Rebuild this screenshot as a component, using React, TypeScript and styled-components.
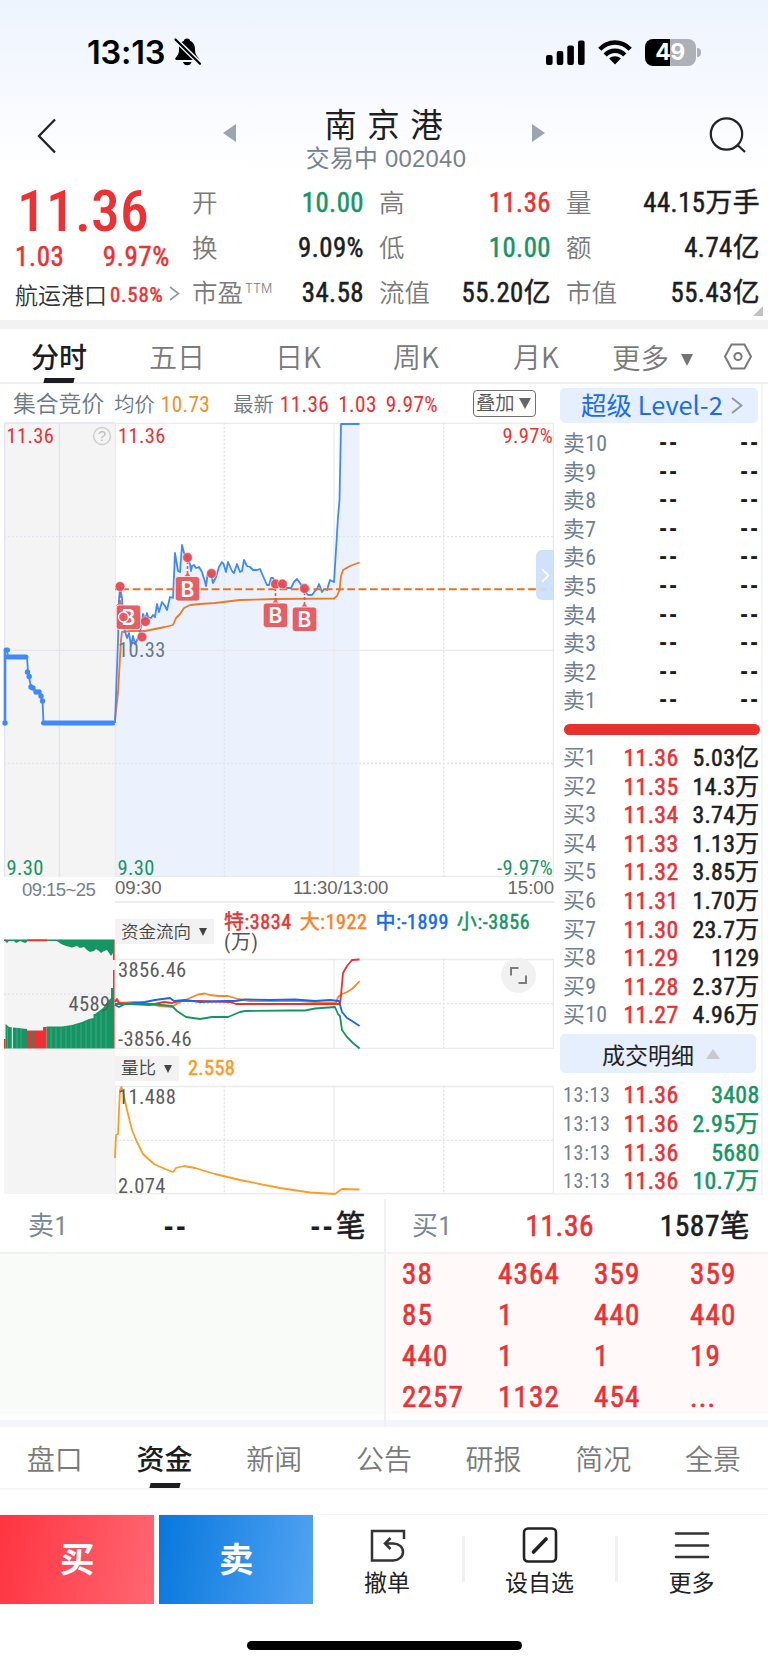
import React from 'react';
import styled, { createGlobalStyle, css } from 'styled-components';

const RED = '#eb3133';
const GREEN = '#159563';
const BLUE = '#4189fb';
const INK = '#1c1d1f';
const SLATE = '#6c7986';
const GRAY = '#7a7a7a';
const NUM = '"Roboto Condensed", "Noto Sans CJK SC", sans-serif';
const CJK = '"Noto Sans CJK SC", sans-serif';
const UI = '"Liberation Sans", "Noto Sans CJK SC", sans-serif';

/* A weight between regular and medium for prices and volumes. */
const semi = css`
  font-weight: 400;
  -webkit-text-stroke: 0.5px currentColor;
`;

const Global = createGlobalStyle`
  *, *::before, *::after { box-sizing: border-box; }
  body { margin: 0; background: #fff; font-family: ${NUM}; color: ${INK}; }
  svg { display: block; flex: none; overflow: visible; }
`;

const Screen = styled.main`
  width: 768px;
  height: 1665px;
  overflow: hidden;
  display: flex;
  flex-direction: column;
  background: linear-gradient(#edf4fe 0, #f5f8ff 75px, #fff 170px);
  white-space: nowrap;
`;

/* ---------- status bar ---------- */
const StatusBar = styled.header`
  height: 88px;
  padding: 16px 67px 0 87px;
  display: flex;
  align-items: center;
`;
const Clock = styled.span`
  font: 600 32.5px/40px Inter, sans-serif;
  letter-spacing: -0.2px;
  color: #000;
  width: 87px;
  margin-top: 1px;
`;
const StatusIcons = styled.div`
  margin-left: auto;
  display: flex;
  align-items: center;
  gap: 13px;
`;
const Battery = styled.div`
  display: flex;
  align-items: center;
  gap: 1.5px;
  &::after {
    content: '';
    width: 4px;
    height: 9px;
    border-radius: 0 4px 4px 0;
    background: #adb0b5;
  }
`;
const BatteryBody = styled.div`
  width: 51px;
  height: 27px;
  border-radius: 8px;
  background: linear-gradient(90deg, #000 50%, #adb0b5 50%);
  color: #fff;
  font: 700 23px/27px Inter, sans-serif;
  letter-spacing: -0.5px;
  text-align: center;
`;

/* ---------- title bar ---------- */
const NavBar = styled.nav`
  height: 92px;
  padding: 0 21px 0 36px;
  display: flex;
  justify-content: space-between;
`;
const NavIcon = styled.div`
  padding-top: 29px;
`;
const TitleGroup = styled.div`
  width: 322px;
  margin-left: 1px;
  display: flex;
  justify-content: space-between;
  padding-top: 13px;
`;
const TitleText = styled.div`
  display: flex;
  flex-direction: column;
  align-items: center;
  padding-top: 3.5px;
  strong {
    font: 400 32.5px/42px ${NUM};
    letter-spacing: 10.5px;
    margin-right: -9.5px;
    color: #1f1f21;
  }
  span {
    font: 400 23.8px/28px ${UI};
    letter-spacing: 0.3px;
    color: #76828f;
    margin-top: -2px;
    margin-left: 4px;
  }
`;
const Switcher = styled.div`
  padding-top: 23px;
`;

/* ---------- quote summary ---------- */
const Quote = styled.section`
  height: 140px;
  display: flex;
`;
const PriceCol = styled.div`
  width: 192px;
  padding: 0 12px 0 15px;
`;
const BigPrice = styled.div`
  font-weight: 500;
  font-size: 57.5px;
  line-height: 58px;
  padding: 3px 0 0 2px;
  letter-spacing: 0.2px;
  color: ${RED};
`;
const ChangeRow = styled.div`
  display: flex;
  justify-content: space-between;
  padding-right: 10px;
  ${semi}
  font-size: 27px;
  line-height: 33px;
  letter-spacing: 0.6px;
  color: ${RED};
`;
const SectorRow = styled.div`
  display: flex;
  align-items: center;
  height: 39px;
  font-weight: 350;
  font-size: 23px;
  color: #333;
  b {
    ${semi}
    font-size: 20.8px;
    letter-spacing: 0.8px;
    color: ${RED};
    margin: 2px 6px 0 3px;
  }
`;
const Stats = styled.div`
  display: grid;
  grid-template-columns: 171px 171px 193px;
  column-gap: 16px;
  grid-template-rows: repeat(3, 45px);
`;
const Stat = styled.div`
  display: flex;
  justify-content: space-between;
  line-height: 47px;
`;
const StatLabel = styled.span`
  font-size: 25.5px;
  font-weight: 350;
  color: ${GRAY};
  sup {
    font-size: 12.5px;
    font-family: Inter, sans-serif;
    line-height: 0;
    vertical-align: 9.5px;
    margin-left: 2px;
  }
`;
const StatValue = styled.span<{ $c?: string }>`
  font-size: 26.8px;
  ${semi}
  letter-spacing: 0.45px;
  margin-right: -1px;
  color: ${p => p.$c || INK};
`;
const Corner = styled.div`
  align-self: flex-end;
  margin: 0 0 4px -6px;
`;
const Band = styled.div<{ $h: number; $c: string }>`
  flex: none;
  height: ${p => p.$h}px;
  background: ${p => p.$c};
`;

/* ---------- tabs ---------- */
const PeriodTabs = styled.div`
  height: 55px;
  background: #fff;
  border-bottom: 2px solid #efefef;
  display: grid;
  grid-template-columns: 118px 118px 124px 112px 128px 114px 54px;
  line-height: 55px;
  text-align: center;
`;
const Tab = styled.div<{ $on?: boolean }>`
  display: flex;
  flex-direction: column;
  align-items: center;
  font-family: ${CJK};
  font-size: 28px;
  font-weight: ${p => (p.$on ? 500 : 350)};
  color: ${p => (p.$on ? INK : GRAY)};
  &::after {
    content: '';
    display: ${p => (p.$on ? 'block' : 'none')};
    width: 30px;
    height: 5px;
    margin-top: -6px;
    background: ${INK};
    transform: skewX(-14deg);
  }
`;
const MoreTab = styled.div`
  display: flex;
  align-items: center;
  gap: 12px;
  padding-left: 12px;
  font-family: ${CJK};
  font-size: 28.5px;
  font-weight: 350;
  line-height: 53px;
  color: ${GRAY};
  svg { margin-top: 6px; }
`;
const HexCell = styled.div`
  display: flex;
  align-items: center;
  padding-left: 10px;
`;

/* ---------- chart body ---------- */
const Body = styled.section`
  display: flex;
  height: 815px;
  background: #fff;
`;
const ChartSide = styled.div`
  width: 554px;
  height: 811px;
`;
const InfoRow = styled.div`
  height: 38px;
  display: flex;
  align-items: center;
  padding: 0 18px 0 13px;
  font-size: 21.3px;
  color: ${SLATE};
`;
const InfoText = styled.span<{ $size: number; $ml?: number }>`
  font-family: ${CJK};
  font-size: ${p => p.$size}px;
  font-weight: 350;
  line-height: 36px;
  margin-left: ${p => p.$ml || 0}px;
  margin-top: -1px;
`;
const InfoNum = styled.span<{ $c: string; $ml: number }>`
  color: ${p => p.$c};
  margin-left: ${p => p.$ml}px;
  margin-top: 3px;
  letter-spacing: 0.35px;
`;
const OverlayButton = styled.button`
  margin: 1px 0 0 auto;
  width: 63px;
  height: 27px;
  padding: 0 4px 0 2px;
  border: 1.6px solid #707070;
  border-radius: 4px;
  background: #fff;
  color: #555;
  font: 400 19.3px/22px ${NUM};
  font-weight: 350;
  display: flex;
  align-items: center;
  justify-content: space-between;
`;
const ChartColumns = styled.div`
  display: flex;
`;
const AuctionCol = styled.div`
  width: 115px;
`;
const MainCol = styled.div`
  width: 439px;
`;
const AuctionTime = styled.div`
  height: 62px;
  padding: 2px 0 0 22px;
  font: 400 18.6px/22px ${UI};
  letter-spacing: -0.6px;
  color: #75818e;
`;
const TimeAxis = styled.div`
  height: 26px;
  display: grid;
  grid-template-columns: 178px 1fr auto;
  font: 400 18.6px/22px ${UI};
  color: #666;
  border-bottom: 2px solid #efefef;
`;
const Noon = styled.span`
  letter-spacing: -0.15px;
`;
const FlowHead = styled.div`
  height: 55px;
  display: flex;
  padding-top: 9px;
`;
const Chip = styled.div<{ $w: number }>`
  width: ${p => p.$w}px;
  height: 25px;
  margin-top: 7px;
  padding: 1px 7px 0 6px;
  background: #f2f2f2;
  display: flex;
  align-items: center;
  justify-content: space-between;
  font-size: 17.5px;
  font-weight: 350;
  line-height: 25px;
  color: #444;
`;
const FlowValues = styled.div`
  padding-left: 10px;
  font-size: 20px;
  line-height: 20px;
  letter-spacing: 0.6px;
  color: #555;
`;
const FlowLine = styled.div`
  display: flex;
  gap: 8px;
  ${semi}
`;
const FlowItem = styled.span<{ $c: string }>`
  color: ${p => p.$c};
`;
const RatioHead = styled.div`
  height: 36px;
  display: flex;
  align-items: center;
  ${Chip} { margin-top: 2px; }
`;
const RatioValue = styled.span`
  margin: 1px 0 0 9px;
  font-size: 20.4px;
  ${semi}
  letter-spacing: 0.3px;
  color: #ff981f;
`;
const PlotWrap = styled.div`
  position: relative;
`;
const SideHandle = styled.div`
  position: absolute;
  right: 0;
  top: 128px;
  width: 18px;
  height: 50px;
  border-radius: 6px 0 0 6px;
  background: #cddffcf0;
  display: flex;
  align-items: center;
  justify-content: center;
`;
const ExpandButton = styled.div`
  position: absolute;
  right: 18px;
  top: 0;
  width: 35px;
  height: 35px;
  border-radius: 50%;
  background: #f1f1f1;
  display: flex;
  align-items: center;
  justify-content: center;
`;
const PlotLabel = styled.text<{ $c?: string }>`
  font-family: ${NUM};
  font-size: 20.5px;
  letter-spacing: 0.35px;
  fill: ${p => p.$c || '#5c5c5c'};
`;

/* ---------- order book ---------- */
const Book = styled.aside`
  width: 209px;
  height: 811px;
  border-right: 2px solid #f5f5f5;
  border-bottom: 2px solid #f5f5f5;
  padding: 4px 3px 0 6px;
`;
const LevelButton = styled.div`
  width: 198px;
  height: 35px;
  border-radius: 5px;
  background: #e5effd;
  color: #1a6dee;
  display: flex;
  align-items: center;
  padding-left: 21px;
  font-family: ${CJK};
  font-size: 25.4px;
  line-height: 31px;
  padding-bottom: 2px;
  gap: 6px;
  svg { margin: 2px 0 0 2px; }
`;
const Rows = styled.div<{ $pt: number }>`
  padding: ${p => p.$pt}px 0 0 3px;
  font-size: 23.9px;
  ${semi}
  letter-spacing: 0.3px;
`;
const BookRow = styled.div`
  display: grid;
  grid-template-columns: 48px 66px 1fr;
  height: 28.6px;
  line-height: 28.6px;
  text-align: right;
`;
const RowLabel = styled.span<{ $time?: boolean }>`
  text-align: left;
  -webkit-text-stroke: 0;
  font-size: ${p => (p.$time ? 20 : 21.8)}px;
  letter-spacing: ${p => (p.$time ? 0.7 : 0.4)}px;
  color: #71808e;
`;
const Cell = styled.span<{ $c?: string }>`
  color: ${p => p.$c || INK};
  margin-right: -1.5px;
`;
const Dashes = styled.span<{ $big?: boolean }>`
  font-family: "Liberation Sans", sans-serif;
  font-weight: 700;
  -webkit-text-stroke: 0;
  font-size: ${p => (p.$big ? 29 : 23)}px;
  letter-spacing: ${p => (p.$big ? 2.6 : 2.2)}px;
  line-height: ${p => (p.$big ? 'inherit' : '24px')};
  margin-right: -2px;
`;
const Count = styled.span`
  ${Dashes} { margin-right: 1px; }
`;
const RatioBar = styled.div`
  width: 196px;
  height: 11px;
  margin: 8px 0 0 3.5px;
  border-radius: 6px;
  background: #e8312f;
`;
const TradesButton = styled.div`
  width: 196px;
  height: 39px;
  margin-top: 4.5px;
  border-radius: 5px;
  background: #e5effd;
  display: flex;
  align-items: center;
  justify-content: center;
  gap: 12px;
  padding-left: 6px;
  font-size: 23px;
  font-weight: 400;
  color: #222;
`;

/* ---------- queue ---------- */
const Queue = styled.section`
  height: 228px;
  display: grid;
  grid-template-columns: 384px 384px;
  background: linear-gradient(#fff 221px, #f4f5fa 221px);
  > div + div { border-left: 2px solid #f1f1f3; }
`;
const QueueHead = styled.div<{ $pl: number }>`
  height: 55px;
  border-bottom: 2px solid #f2f2f4;
  padding: 0 18px 0 ${p => p.$pl}px;
  display: grid;
  grid-template-columns: 60px 174px 1fr;
  line-height: 54px;
  font-size: 29.5px;
  ${semi}
  -webkit-text-stroke-width: 0.6px;
  letter-spacing: 0.5px;
  text-align: center;
  > :last-child { text-align: right; }
`;
const QueueLabel = styled.span`
  text-align: left;
  font-size: 26px;
  -webkit-text-stroke: 0;
  color: #7a8794;
`;
const QueueGrid = styled.div<{ $bg: string }>`
  height: 160px;
  background: ${p => p.$bg};
  padding-left: 16px;
  display: grid;
  grid-template-columns: repeat(4, 96px);
  grid-auto-rows: 41px;
  line-height: 40px;
  font-size: 29.2px;
  ${semi}
  -webkit-text-stroke-width: 0.6px;
  letter-spacing: 1.1px;
  color: ${RED};
`;

/* ---------- bottom ---------- */
const SectionTabs = styled.div`
  height: 63px;
  border-bottom: 2px solid #f7f7f7;
  background: #fff;
  display: grid;
  grid-template-columns: repeat(7, 109.7px);
  line-height: 63px;
  ${Tab}::after { margin-top: -7px; }
`;
const Actions = styled.footer`
  margin-top: 24px;
  height: 90px;
  border-top: 1px solid #f5f5f5;
  display: flex;
`;
const TradeButton = styled.button<{ $from: string; $to: string; $mr: number }>`
  width: 153.5px;
  height: 89px;
  flex: none;
  margin: 0 ${p => p.$mr}px 0 0;
  padding: 0 0 0 1px;
  border: 0;
  color: #fff;
  background: linear-gradient(100deg, ${p => p.$from}, ${p => p.$to});
  font: 700 34.5px/91px ${NUM};
`;
const Action = styled.div<{ $w: number }>`
  width: ${p => p.$w}px;
  height: 86px;
  display: flex;
  flex-direction: column;
  align-items: center;
  padding-top: 11px;
  font-size: 23px;
  font-weight: 400;
  line-height: 30px;
  color: #222;
  svg { margin-bottom: 5px; }
`;
const Divider = styled.i`
  width: 3px;
  height: 46px;
  margin-top: 21px;
  background: #f1f1f1;
`;
const HomeBar = styled.div`
  width: 275px;
  height: 9px;
  margin: 37px auto 0;
  border-radius: 5px;
  background: #000;
`;

const Down = ({ w, h, c, up }: { w: number; h: number; c: string; up?: boolean }) => (
  <svg width={w} height={h} viewBox="0 0 10 10" preserveAspectRatio="none">
    <path d={up ? 'M0 10H10L5 0Z' : 'M0 0H10L5 10Z'} fill={c} />
  </svg>
);

const Chevron = ({ w, h, c, s = 2 }: { w: number; h: number; c: string; s?: number }) => (
  <svg width={w} height={h} viewBox={`0 0 ${w} ${h}`} fill="none" stroke={c} strokeWidth={s}>
    <path d={`M1 1L${w - 1.5} ${h / 2}L1 ${h - 1}`} />
  </svg>
);

/* Series are kept in screen units; each plot's viewBox picks its own window. */
const PRICE = '115,723 118,640 119,600 120,588 122,598 124,628 127,638 129,633 131,646 133,636 135,644 137,640 140,632 143,614 145,619 147,613 148,617 151,618 153,615 155,617 157,604 159,612 162,602 165,606 167,610 170,597 173,598 175,553 178,571 180,572 182,545 184,553 187,557 190,564 191,571 192,566 194,565 196,568 199,567 202,572 205,582 206,586 208,572 211,574 213,583 216,577 219,567 222,562 223.5,564 226,572 228,562 232,571 234,573 237,564 240,572 242,571 244,560 247,566 250,567 253,570 257,570 260,569 263,576 267,585 269,585 271,578 273,578 276,583 281,584 287,588 291,588 294,582 297,579 300,583 304,590 308,595 312,595 315,591 317,589 319,584 322,592 324,589 327,590 330,580 334,582 336,550 338,517 339.5,500 341,424 359.6,424';
const AVERAGE = '115,720 118,693 121,640 122,632 130,631 145,631 155,629 165,627 173,625 176,618 180,614 184,608 190,605 200,604 215,603 240,600 275,599 334,598.5 337,596 339.5,590 341,576 343,570 350,566 359.6,562.5';
const AUCTION = '5,723 5,650 7,650 8,657 27,657 28,672 29,677 31,687 33,688 36,692 39,692 41,696 42.5,701 43.5,723 114,723';
const FLOWS: [string, string][] = [
  ['#ff8526', '115,1000 120,1003 135,1002 150,1004 160,1006 172,1007 178,1003 190,998 198,994.5 205,993.5 210,995 218,996 228,996 238,999 250,1001 300,1001 320,1002.5 336,1003 338,997 342,994 347,992 352,989 356,985 359.6,981'],
  [RED, '115,1002 117,999 119,1003 130,1004 150,1005 164,1002 172,1003 180,1001 200,1001 230,1002 236,1004 340,1004 341,995 343,973 347,966 352,960 359.6,959.5'],
  ['#1268f3', '115,1005 119,1007 125,1004 145,1002 155,1000 170,998 174,1001 185,1000 200,1002 225,1001 235,1001 245,999.5 270,1000 295,999.5 315,1001 330,1000 339,1001 342,1012 347,1018 352,1021 359.6,1026'],
  [GREEN, '115,1004 135,1004 150,1004 172,1006 177,1011 186,1017 200,1019 212,1017 228,1017 240,1012 245,1011 290,1010.5 305,1010.5 315,1008.5 335,1007 338,1014 340,1016 342,1030 347,1037 353,1043 359.6,1048.5'],
];
const VOLUME_RATIO = '115,1158 116,1135 118,1134 119,1110 120,1090 121.5,1087 123,1092 127,1110 132,1130 137,1142 143,1154 154,1164 165,1169 173,1172 176,1168 184,1166 195,1168 215,1174 240,1180 280,1188 310,1192.5 335,1194 342,1189 359.6,1189.5';

const DOTS = [[120, 586.5], [145.5, 621.5], [142, 637], [187.5, 557.5], [211.5, 573.5], [275.5, 584], [282.5, 584], [304.5, 588.5]];
const BUYS = [[128.5, 617, 120, 590], [187.5, 588.5, 187.5, 561], [275.5, 615, 275.5, 588], [304.5, 619, 304.5, 592]];

const Grid = ({ top, bottom, mid }: { top: number; bottom: number; mid: number[] }) => (
  <g stroke="#e3e3ea" strokeWidth={1.3} fill="none">
    <path d={`M115 ${top + 0.7}H553.3V${bottom - 0.7}H115.5V${top}`} stroke="#ebebee" />
    <path d={`M334 ${top}V${bottom}`} stroke="#ebebf0" />
    <path d={`M224.3 ${top}V${bottom}M443.7 ${top}V${bottom}`} strokeDasharray="2 2" />
    {mid.map(y => <path key={y} d={`M115 ${y}H553`} strokeDasharray="2 2" />)}
  </g>
);

const PricePlot = () => (
  <svg width="439" height="455" viewBox="115 422 439 455">
    <polygon points={`115,877 ${PRICE} 359.6,877`} fill="#ebf2fe" />
    <Grid top={422.7} bottom={877} mid={[536.7, 763.5]} />
    <path d="M115 650.3H553" stroke="#e8e8ee" strokeWidth="1.3" />
    <polyline points={AVERAGE} fill="none" stroke="#ee7a22" strokeWidth="1.8" strokeLinejoin="round" />
    <polyline points={PRICE} fill="none" stroke={BLUE} strokeWidth="1.8" strokeLinejoin="round" />
    <path d="M115 589.3H553" stroke="#e9711f" strokeWidth="2" strokeDasharray="7.8 3.5" strokeDashoffset="5" />
    <PlotLabel x="118" y="443" $c={RED}>11.36</PlotLabel>
    <PlotLabel x="553" y="443" textAnchor="end" $c={RED}>9.97%</PlotLabel>
    <PlotLabel x="118" y="657.3" $c="#6c7884">10.33</PlotLabel>
    <PlotLabel x="117.5" y="875" $c={GREEN}>9.30</PlotLabel>
    <PlotLabel x="553" y="875" textAnchor="end" $c={GREEN}>-9.97%</PlotLabel>
    <g opacity="0.93">
      {BUYS.map(([x, y, dx, dy]) => (
        <g key={x}>
          <path d={`M${dx} ${dy}V${y - 12}`} stroke="#e04a52" strokeWidth="1.6" strokeDasharray="3 2" />
          <path d={`M${dx - 4} ${y - 11}l4 -5l4 5z`} fill="#e6545a" />
          <rect x={x - 12.3} y={y - 12} width="24.6" height="24.6" rx="3" fill="#e6545a" stroke="#fff" strokeWidth="0.8" />
          <text x={x} y={y + 8} textAnchor="middle" fill="#fff" fontFamily="Inter, sans-serif" fontWeight="600" fontSize="21">B</text>
        </g>
      ))}
      {DOTS.map(([x, y]) => <circle key={x} cx={x} cy={y} r="4.9" fill="#e5484f" stroke="#ffffffb0" strokeWidth="0.8" />)}
      <circle cx="123.5" cy="617" r="5" fill="#e6545a" stroke="#fff" strokeWidth="1.3" />
    </g>
  </svg>
);

const AuctionPlot = () => (
  <svg width="115" height="455" viewBox="0 422 115 455">
    <rect x="4" y="423" width="111" height="454" fill="#f4f4f4" />
    <g stroke="#e4e4ee" strokeWidth="1.3" fill="none">
      <path d="M4.5 877V423H115M59.5 423V877M4 650.3H115" />
      <path d="M4 536.7H115M4 763.5H115" strokeDasharray="2 2" />
    </g>
    <polyline points={AUCTION} fill="none" stroke={BLUE} strokeWidth="1.8" />
    <path d="M5 651V723M8 657H27M43.5 723H115" stroke={BLUE} strokeWidth="2.6" />
    <path d="M8 657H26M43.5 723H113M6 650H7.5" stroke={BLUE} strokeWidth="5" strokeLinecap="round" />
    {[[5, 723], [27.5, 672], [29.2, 676.5], [31, 687], [33, 688], [36, 692], [39, 692], [41, 696], [42.5, 701]].map(([x, y]) => (
      <circle key={x} cx={x} cy={y} r="2.7" fill={BLUE} />
    ))}
    <PlotLabel x="6.5" y="443" $c={RED}>11.36</PlotLabel>
    <PlotLabel x="6.5" y="875" $c={GREEN}>9.30</PlotLabel>
    <circle cx="102" cy="436" r="8.4" fill="none" stroke="#cfcfcf" strokeWidth="1.5" />
    <text x="102" y="441.3" textAnchor="middle" fontFamily="Liberation Sans, sans-serif" fontSize="14.5" fill="#bdbdbd">?</text>
  </svg>
);

const AuctionVolume = () => (
  <svg width="115" height="255" viewBox="0 939 115 255">
    <rect x="4" y="939" width="111" height="255" fill="#f4f4f4" />
    <path d="M4 994H113" stroke="#e4e4f0" strokeWidth="1.3" strokeDasharray="2 2" />
    <path d="M5 939.5V941L7 943L9 941L14 941L16 943L20 941L25 943L27 942V941H57L61 944L66 946L72 947.5L77 946L80 948L84 947L87 950L90 952L94 951L96 949L99 951L101 953L104 951L107 950L109 953L111 956L113 953V939.5Z" fill={GREEN} />
    <path d="M27 939.5H47V941.3H27ZM4 939.5H6V941H4ZM113 939.5H114.6V960H113Z" fill={RED} />
    <path d="M5.5 1048.5V1024L9 1027L18 1028L27 1029V1048.5ZM46.5 1048.5V1026.5H62L72 1025L82 1022L89 1019L93.5 1018V1014H95L99 1011L103 1008L108 1001L111 998V988H113V1048.5Z" fill={GREEN} />
    <path d="M4 1039H5.5V1048.5H4ZM27 1030.5H32V1048.5H27ZM33 1030.5H43V1027H46.5V1048.5H33ZM113 970H114.6V1048.5H113Z" fill={RED} />
    <path d="M32 1030.5H33V1048.5H32Z" fill={GREEN} />
    <path d="M12.3 1027V1048.5" stroke="#fff" strokeWidth="1" />
    <path d="M7.5 1027V1048M17 1028V1048M21 1029V1048M51 1028V1048M56 1028V1048M61 1028V1048M66 1027V1048M71 1026V1048M76 1025V1048M81 1024V1048M86 1022V1048M91 1020V1048M96 1016V1048M101 1012V1048M106 1006V1048" stroke="#fff" strokeOpacity="0.18" />
    <PlotLabel x="110.5" y="1011" textAnchor="end">4589</PlotLabel>
  </svg>
);

const FlowPlot = () => (
  <svg width="439" height="91" viewBox="115 958 439 91">
    <Grid top={958.8} bottom={1049} mid={[1003.7]} />
    {FLOWS.map(([c, pts]) => <polyline key={c} points={pts} fill="none" stroke={c} strokeWidth="1.8" strokeLinejoin="round" />)}
    <PlotLabel x="118" y="977.3">3856.46</PlotLabel>
    <PlotLabel x="118" y="1046.3">-3856.46</PlotLabel>
  </svg>
);

const RatioPlot = () => (
  <svg width="439" height="109" viewBox="115 1085 439 109">
    <Grid top={1085.8} bottom={1194.4} mid={[1140.3]} />
    <polyline points={VOLUME_RATIO} fill="none" stroke="#ff9b26" strokeWidth="1.8" strokeLinejoin="round" />
    <PlotLabel x="118" y="1103.5">11.488</PlotLabel>
    <PlotLabel x="118" y="1192.5">2.074</PlotLabel>
  </svg>
);

const stats: [React.ReactNode, string, string?][] = [
  ['开', '10.00', GREEN], ['高', '11.36', RED], ['量', '44.15万手'],
  ['换', '9.09%'], ['低', '10.00', GREEN], ['额', '4.74亿'],
  [<>市盈<sup>TTM</sup></>, '34.58'], ['流值', '55.20亿'], ['市值', '55.43亿'],
];
const bids = [['11.36', '5.03亿'], ['11.35', '14.3万'], ['11.34', '3.74万'], ['11.33', '1.13万'], ['11.32', '3.85万'], ['11.31', '1.70万'], ['11.30', '23.7万'], ['11.29', '1129'], ['11.28', '2.37万'], ['11.27', '4.96万']];
const trades = ['3408', '2.95万', '5680', '10.7万'];
const queue = ['38', '4364', '359', '359', '85', '1', '440', '440', '440', '1', '1', '19', '2257', '1132', '454', '...'];

export default function App() {
  return (
    <Screen>
      <Global />
      <StatusBar>
        <Clock>13:13</Clock>
        <svg width="27" height="28" viewBox="0 0 27 28">
          <path d="M13 0.5c-2 0-3 1.2-3.2 2.6C6.3 4.5 5 7.5 5 11c0 5-1.5 6.5-3.5 9-.7 1 0 2 1 2h21c1 0 1.7-1 1-2-2-2.5-3.5-4-3.5-9 0-3.500-1.300-6.500-4.800-7.900C16 1.700 15 .5 13 .5z" />
          <path d="M9 24h8.500c-.5 2-2 3.300-4.200 3.300S9.500 26 9 24z" />
          <path d="M1.500 1.500L26.500 26" stroke="#f3f7fe" strokeWidth="5" />
          <path d="M1.500 1.500L26 25.800" stroke="#000" strokeWidth="2.200" strokeLinecap="round" />
        </svg>
        <StatusIcons>
          <svg width="39" height="25" viewBox="0 0 39 25">
            <rect x="0" y="15" width="6.600" height="10" rx="2" /><rect x="10.700" y="11" width="6.600" height="14" rx="2" />
            <rect x="21.300" y="5.500" width="6.600" height="19.500" rx="2" /><rect x="32" y="0.500" width="6.600" height="24.500" rx="2" />
          </svg>
          <svg width="34" height="25" viewBox="0 0 34 25" fill="none" stroke="#000" strokeWidth="4.400">
            <path d="M1.800 9.300C10 .2 24 .2 32.200 9.300" /><path d="M7.200 15C12.500 9.300 21.500 9.300 26.800 15" />
            <path d="M17 24.500L11.200 18.600C14.500 15.500 19.500 15.500 22.800 18.600Z" fill="#000" stroke="none" />
          </svg>
          <Battery><BatteryBody>49</BatteryBody></Battery>
        </StatusIcons>
      </StatusBar>

      <NavBar>
        <NavIcon>
          <svg width="22" height="38" viewBox="0 0 22 38" fill="none" stroke="#222" strokeWidth="2.300"><path d="M19 2.500L3 19L19 35.500" /></svg>
        </NavIcon>
        <TitleGroup>
          <Switcher><svg width="13" height="18" viewBox="0 0 13 18"><path d="M13 0V18L0 9Z" fill="#9aa5b1" /></svg></Switcher>
          <TitleText><strong>南京港</strong><span>交易中 002040</span></TitleText>
          <Switcher><svg width="13" height="18" viewBox="0 0 13 18"><path d="M0 0V18L13 9Z" fill="#9aa5b1" /></svg></Switcher>
        </TitleGroup>
        <NavIcon>
          <svg width="38" height="36" viewBox="0 0 38 36" fill="none" stroke="#222" strokeWidth="2.200"><circle cx="17.500" cy="17" r="15.700" /><path d="M28 27.500L36 35" /></svg>
        </NavIcon>
      </NavBar>

      <Quote>
        <PriceCol>
          <BigPrice>11.36</BigPrice>
          <ChangeRow><span>1.03</span><span>9.97%</span></ChangeRow>
          <SectorRow>航运港口<b>0.58%</b><Chevron w={11} h={15} c="#8e9aa6" s={1.6} /></SectorRow>
        </PriceCol>
        <Stats>
          {stats.map(([label, value, color], i) => (
            <Stat key={i}><StatLabel>{label}</StatLabel><StatValue $c={color}>{value}</StatValue></Stat>
          ))}
        </Stats>
        <Corner><svg width="10" height="10" viewBox="0 0 10 10"><path d="M10 0V10H0Z" fill="#c2c2c2" /></svg></Corner>
      </Quote>
      <Band $h={9} $c="#f2f2f2" />

      <PeriodTabs>
        <Tab $on>分时</Tab><Tab>五日</Tab><Tab>日K</Tab><Tab>周K</Tab><Tab>月K</Tab>
        <MoreTab>更多<Down w={12} h={12} c="#757575" /></MoreTab>
        <HexCell>
          <svg width="28" height="27" viewBox="0 0 28 27" fill="none" stroke="#7a7a7a" strokeWidth="2"><path d="M7.500 1.500H20.500L27 13.500L20.500 25.500H7.500L1 13.500Z" /><circle cx="14" cy="13.500" r="3.600" /></svg>
        </HexCell>
      </PeriodTabs>

      <Body>
        <ChartSide>
          <InfoRow>
            <InfoText $size={22.8}>集合竞价</InfoText>
            <InfoText $size={20.3} $ml={10}>均价</InfoText>
            <InfoNum $c="#ee9230" $ml={6}>10.73</InfoNum>
            <InfoText $size={20.3} $ml={23}>最新</InfoText>
            <InfoNum $c={RED} $ml={6}>11.36</InfoNum>
            <InfoNum $c={RED} $ml={9}>1.03</InfoNum>
            <InfoNum $c={RED} $ml={9}>9.97%</InfoNum>
            <OverlayButton>叠加<Down w={12} h={11} c="#666" /></OverlayButton>
          </InfoRow>
          <ChartColumns>
            <AuctionCol>
              <AuctionPlot />
              <AuctionTime>09:15~25</AuctionTime>
              <AuctionVolume />
            </AuctionCol>
            <MainCol>
              <PlotWrap>
                <PricePlot />
                <SideHandle><Chevron w={9} h={15} c="#fff" s={1.8} /></SideHandle>
              </PlotWrap>
              <TimeAxis><span>09:30</span><Noon>11:30/13:00</Noon><span>15:00</span></TimeAxis>
              <FlowHead>
                <Chip $w={99}>资金流向<Down w={8} h={8} c="#444" /></Chip>
                <FlowValues>
                  <FlowLine>
                    <FlowItem $c={RED}>特:3834</FlowItem>
                    <FlowItem $c="#ff7f27">大:1922</FlowItem>
                    <FlowItem $c="#1268f3">中:-1899</FlowItem>
                    <FlowItem $c={GREEN}>小:-3856</FlowItem>
                  </FlowLine>
                  (万)
                </FlowValues>
              </FlowHead>
              <PlotWrap>
                <FlowPlot />
                <ExpandButton>
                  <svg width="17" height="17" viewBox="0 0 17 17" fill="none" stroke="#7c7c7c" strokeWidth="2"><path d="M1 8.500V1H8.500M16 8.500V16H8.500" /></svg>
                </ExpandButton>
              </PlotWrap>
              <RatioHead><Chip $w={64}>量比<Down w={8} h={8} c="#444" /></Chip><RatioValue>2.558</RatioValue></RatioHead>
              <RatioPlot />
            </MainCol>
          </ChartColumns>
        </ChartSide>

        <Book>
          <LevelButton><span>超级</span><span>Level-2</span><Chevron w={12} h={17} c="#8f9aa8" /></LevelButton>
          <Rows $pt={7}>
            {Array.from({ length: 10 }, (_, i) => (
              <BookRow key={i}><RowLabel>卖{10 - i}</RowLabel><Dashes>--</Dashes><Dashes>--</Dashes></BookRow>
            ))}
          </Rows>
          <RatioBar />
          <Rows $pt={9}>
            {bids.map(([price, size], i) => (
              <BookRow key={price}><RowLabel>买{i + 1}</RowLabel><Cell $c={RED}>{price}</Cell><Cell>{size}</Cell></BookRow>
            ))}
          </Rows>
          <TradesButton>成交明细<Down up w={14} h={10} c="#c9c9c9" /></TradesButton>
          <Rows $pt={8}>
            {trades.map(size => (
              <BookRow key={size}><RowLabel $time>13:13</RowLabel><Cell $c={RED}>11.36</Cell><Cell $c={GREEN}>{size}</Cell></BookRow>
            ))}
          </Rows>
        </Book>
      </Body>

      <Queue>
        <div>
          <QueueHead $pl={28}><QueueLabel>卖1</QueueLabel><Dashes $big>--</Dashes><Count><Dashes $big>--</Dashes>笔</Count></QueueHead>
          <QueueGrid $bg="#f8fbf8" />
        </div>
        <div>
          <QueueHead $pl={26}><QueueLabel>买1</QueueLabel><Cell $c={RED}>11.36</Cell><Count>1587笔</Count></QueueHead>
          <QueueGrid $bg="#fff9f9">{queue.map((n, i) => <span key={i}>{n}</span>)}</QueueGrid>
        </div>
      </Queue>

      <SectionTabs>
        <Tab>盘口</Tab><Tab $on>资金</Tab><Tab>新闻</Tab><Tab>公告</Tab><Tab>研报</Tab><Tab>简况</Tab><Tab>全景</Tab>
      </SectionTabs>
      <Actions>
        <TradeButton $from="#ff3441" $to="#ff6772" $mr={5.5}>买</TradeButton>
        <TradeButton $from="#0777dd" $to="#52a4f3" $mr={0}>卖</TradeButton>
        <Action $w={149}>
          <svg width="36" height="38" viewBox="0 0 36 38" fill="none" stroke="#333" strokeWidth="2.500"><path d="M35 13V5H3V34.500H24C30 34.500 34 30.500 34 26C34 21 30 17.500 24 17.500H16M21.500 12L16 17.500L21.500 23" /></svg>
          撤单
        </Action>
        <Divider />
        <Action $w={150}>
          <svg width="36" height="38" viewBox="0 0 36 38" fill="none" stroke="#222" strokeWidth="2.600"><rect x="2" y="2.500" width="32" height="33" rx="4" /><path d="M11.500 26L24 13" strokeWidth="3.600" strokeLinecap="round" /></svg>
          设自选
        </Action>
        <Divider />
        <Action $w={148}>
          <svg width="36" height="38" viewBox="0 0 36 38" stroke="#333" strokeWidth="2.600" strokeLinecap="round"><path d="M2 7.500H34M2 19.500H34M2 31H34" /></svg>
          更多
        </Action>
      </Actions>
      <HomeBar />
    </Screen>
  );
}
